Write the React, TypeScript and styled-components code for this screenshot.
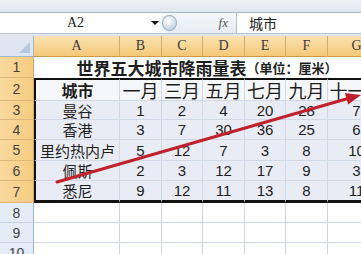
import styled, { createGlobalStyle } from 'styled-components';

const GlobalStyle = createGlobalStyle`
  body {
    margin: 0;
    overflow: hidden;
    background: #fff;
    font-family: 'Liberation Sans', 'Noto Sans CJK SC', sans-serif;
  }
`;

const cjk = `'Noto Sans CJK SC', 'Noto Sans', sans-serif`;

const Window = styled.div`
  position: relative;
  width: 361px;
  height: 254px;
  overflow: hidden;
  background: #fff;
`;

const RibbonEdge = styled.div`
  height: 12px;
  background: linear-gradient(#eef2f6, #dfe6ee);
  border-bottom: 1px solid #9fb6cb;
`;

const FormulaBar = styled.div`
  display: flex;
  height: 20px;
  background: #fff;
  border-bottom: 1px solid #b7c7d8;
`;

const NameBox = styled.div`
  width: 160px;
  display: flex;
  align-items: center;
  font-family: 'Liberation Serif', serif;
  font-size: 14px;
  color: #222;
  padding-left: 67px;
  box-sizing: border-box;
  gap: 67px;
`;

const DropArrow = styled.span`
  width: 0;
  height: 0;
  border-left: 4px solid transparent;
  border-right: 4px solid transparent;
  border-top: 4px solid #111;
`;

const FxArea = styled.div`
  width: 77px;
  display: flex;
  align-items: center;
  justify-content: flex-end;
  padding-right: 8px;
  box-sizing: border-box;
  background: linear-gradient(#f5f8fb, #e6ecf3);
  border-radius: 9px 0 0 9px;
  border-right: 1px solid #aebfd1;
  position: relative;
`;

const Knob = styled.span`
  position: absolute;
  left: 2px;
  top: 2px;
  width: 15px;
  height: 16px;
  border-radius: 50%;
  background: radial-gradient(circle at 40% 35%, #ffffff, #c9d5e3 70%, #a9bbcf);
  border: 1px solid #9fb2c7;
  box-sizing: border-box;
`;

const Fx = styled.span`
  font-family: 'Liberation Serif', serif;
  font-style: italic;
  font-size: 13px;
  color: #555;
`;

const Input = styled.div`
  flex: 1;
  display: flex;
  align-items: center;
  padding-left: 12px;
  font-family: ${cjk};
  font-size: 14px;
  color: #222;
`;

const Gap = styled.div`
  height: 2px;
  background: #dfe6ee;
`;

const Sheet = styled.div`
  display: grid;
  grid-template-columns: 34px 86px 42px 41px 42px 41px 42px 58px;
  grid-template-rows: 21px 21px 23px 19px 20px 21px 20px 22px 20px 20px 20px;
  width: 449px;
`;

const Corner = styled.div`
  position: relative;
  background: #dde6f0;
  border-right: 1px solid #9fb6cb;
  border-bottom: 1px solid #9fb6cb;
  &::after {
    content: '';
    position: absolute;
    right: 3px;
    bottom: 3px;
    border-left: 11px solid transparent;
    border-bottom: 11px solid #b5c7dc;
  }
`;

const ColHead = styled.div`
  display: flex;
  align-items: center;
  justify-content: center;
  background: linear-gradient(#fbe2b2, #f4c978);
  border-right: 1px solid #d3ac6a;
  border-bottom: 1px solid #c79b54;
  font-family: 'Liberation Serif', serif;
  font-size: 14px;
  color: #3a3a3a;
`;

const RowHead = styled.div<{ $active: boolean }>`
  display: flex;
  align-items: center;
  justify-content: center;
  background: ${(p) => (p.$active ? 'linear-gradient(90deg, #fad99e, #f5cb80)' : '#e4ecf7')};
  border-right: 1px solid ${(p) => (p.$active ? '#d1a865' : '#9fb6cb')};
  border-bottom: 1px solid ${(p) => (p.$active ? '#dcb77a' : '#c5d3e3')};
  font-size: 14px;
  color: #444;
`;

const Cell = styled.div<{
  $fill?: string;
  $top?: boolean;
  $left?: boolean;
  $bottom?: boolean;
  $size?: number;
  $bold?: boolean;
  $cjk?: boolean;
}>`
  display: flex;
  align-items: center;
  justify-content: center;
  box-sizing: border-box;
  overflow: hidden;
  white-space: nowrap;
  background: ${(p) => p.$fill || '#fff'};
  border-right: 1px solid #d0d7e5;
  border-bottom: ${(p) => (p.$bottom ? '3px solid #111' : '1px solid #d0d7e5')};
  border-top: ${(p) => (p.$top ? '2px solid #111' : 'none')};
  border-left: ${(p) => (p.$left ? '2px solid #111' : 'none')};
  font-family: ${(p) => (p.$cjk ? cjk : `'Liberation Sans', sans-serif`)};
  font-size: ${(p) => p.$size || 15}px;
  font-weight: ${(p) => (p.$bold ? 700 : 400)};
  color: #1e1e1e;
`;

const TitleCell = styled(Cell)`
  grid-column: 2 / span 7;
  padding-right: 5px;
  font-family: ${cjk};
  font-size: 17px;
  font-weight: 700;
  border-bottom: none;
`;

const Unit = styled.span`
  font-size: 13px;
`;

const Arrow = styled.svg`
  position: absolute;
  left: 0;
  top: 0;
  pointer-events: none;
`;

const cols = ['A', 'B', 'C', 'D', 'E', 'F', 'G'];
const months = ['一月', '三月', '五月', '七月', '九月', '十一月'];
const rows: [string, number[]][] = [
  ['曼谷', [1, 2, 4, 20, 28, 7]],
  ['香港', [3, 7, 30, 36, 25, 6]],
  ['里约热内卢', [5, 12, 7, 3, 8, 10]],
  ['佩斯', [2, 3, 12, 17, 9, 3]],
  ['悉尼', [9, 12, 11, 13, 8, 11]],
];

const App = () => {
  return (
    <Window>
      <GlobalStyle />
      <RibbonEdge />
      <FormulaBar>
        <NameBox>
          A2
          <DropArrow />
        </NameBox>
        <FxArea>
          <Knob />
          <Fx>fx</Fx>
        </FxArea>
        <Input>城市</Input>
      </FormulaBar>
      <Gap />
      <Sheet>
        <Corner />
        {cols.map((c) => (
          <ColHead key={c}>{c}</ColHead>
        ))}

        <RowHead $active>1</RowHead>
        <TitleCell>
          世界五大城市降雨量表<Unit>（单位：厘米）</Unit>
        </TitleCell>

        <RowHead $active>2</RowHead>
        <Cell $top $left $cjk $bold $size={16} $fill="#f6f7fb">
          城市
        </Cell>
        {months.map((m) => (
          <Cell key={m} $top $cjk $size={18} $fill="#f6f7fb">
            {m}
          </Cell>
        ))}

        {rows.map(([city, vals], i) => {
          const last = i === rows.length - 1;
          return [
            <RowHead key={`h${i}`} $active>
              {i + 3}
            </RowHead>,
            <Cell key={`c${i}`} $left $bottom={last} $cjk $fill="#e9ecf5">
              {city}
            </Cell>,
            ...vals.map((v, j) => (
              <Cell key={`v${i}-${j}`} $bottom={last} $fill="#e9ecf5">
                {v}
              </Cell>
            )),
          ];
        })}

        {[8, 9, 10].map((n) => [
          <RowHead key={`h${n}`} $active={false}>
            {n}
          </RowHead>,
          ...cols.map((c) => <Cell key={`${c}${n}`} />),
        ])}
      </Sheet>
      <Arrow width="361" height="254" viewBox="0 0 361 254">
        <line x1="57" y1="182" x2="347" y2="98.8" stroke="#c0212b" strokeWidth="3" strokeLinecap="round" />
        <polygon points="361,95 348.2,104.6 344.9,93" fill="#c0212b" />
      </Arrow>
    </Window>
  );
};

export default App;
